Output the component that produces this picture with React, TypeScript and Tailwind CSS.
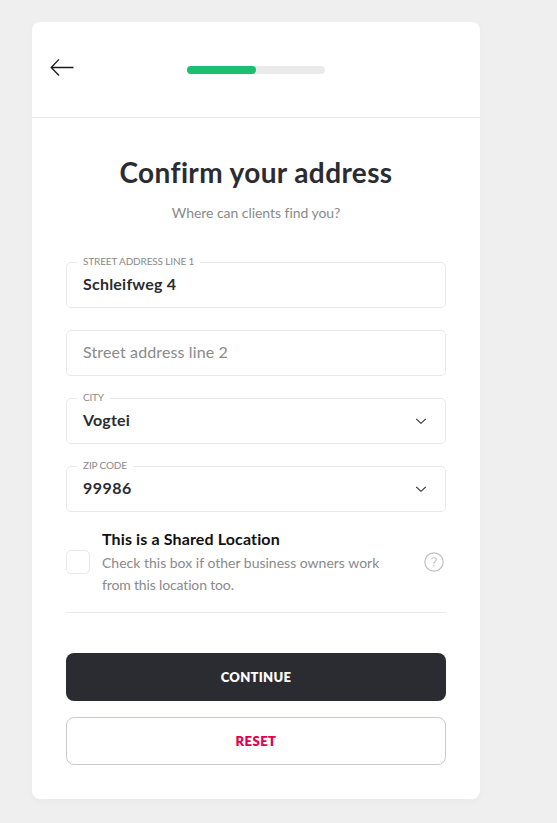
import React from "react";

function Chevron() {
  return (
    <svg width="12" height="8" viewBox="0 0 12 8" fill="none" className="shrink-0">
      <path d="M1.2 1.8 L6 6.3 L10.8 1.8" stroke="#2b2c31" strokeWidth="1.1" />
    </svg>
  );
}

type FieldProps = {
  label?: string;
  labelClass?: string;
  value?: string;
  valueClass?: string;
  placeholder?: string;
  select?: boolean;
};

function Field({ label, labelClass = "", value, valueClass = "", placeholder, select }: FieldProps) {
  return (
    <div className="relative flex h-[46px] items-center justify-between rounded-[5px] border border-[#e9e9e9] pl-4 pr-[18px]">
      {label && (
        <span className="absolute -top-[8px] left-[10px] bg-white px-[6px] text-[10px] leading-[12px] whitespace-nowrap text-[#8a8a8a]">
          <span className={labelClass}>{label}</span>
        </span>
      )}
      {value ? (
        <span className={`pb-[2px] text-base leading-5 font-bold whitespace-nowrap text-[#2b2c31] ${valueClass}`}>{value}</span>
      ) : (
        <span className="pb-[2px] text-base leading-5 tracking-[0.12px] whitespace-nowrap text-[#8a8a8a]">{placeholder}</span>
      )}
      {select && <Chevron />}
    </div>
  );
}

export default function App() {
  return (
    <div className="h-[823px] w-full overflow-hidden bg-[#efefef] pt-[22px] pl-8 font-['Lato','Open_Sans',sans-serif] [font-variant-ligatures:none]">
      <main className="flex h-[777px] w-[448px] flex-col rounded-lg bg-white shadow-[0_2px_8px_rgba(0,0,0,0.03)]">
        <header className="flex h-24 shrink-0 items-center border-b border-[#e9e9e9] pl-[18px]">
          <button className="mt-[-5px] shrink-0" aria-label="Back">
            <svg width="24" height="18" viewBox="0 0 24 18" fill="none">
              <path d="M9 1.4 L1.2 9.5 L9 17.5 M1.2 9.5 H23.5" stroke="#1c1c1e" strokeWidth="1.35" />
            </svg>
          </button>
          <div className="ml-[113px] h-2 w-[138px] rounded-full bg-[#eaeaea]">
            <div className="h-2 w-1/2 rounded-full bg-[#1bbf72]" />
          </div>
        </header>

        <section className="flex flex-col px-[34px]">
          <h1 className="mt-[36px] text-center text-[28px] leading-9 font-bold tracking-[0.38px] whitespace-nowrap text-[#2b2c31]">
            Confirm your address
          </h1>
          <p className="mt-[13px] text-center text-sm leading-5 tracking-[-0.05px] whitespace-nowrap text-[#8a8a8a]">
            Where can clients find you?
          </p>

          <div className="mt-[39px] flex flex-col gap-[22px]">
            <Field label="STREET ADDRESS LINE 1" labelClass="tracking-[-0.14px]" value="Schleifweg 4" valueClass="tracking-[0.22px]" />
            <Field placeholder="Street address line 2" />
            <Field label="CITY" labelClass="tracking-[-0.2px]" value="Vogtei" valueClass="tracking-[0.2px]" select />
            <Field label="ZIP CODE" labelClass="tracking-[-0.14px]" value="99986" valueClass="tracking-[0.5px]" select />
          </div>

          <div className="flex h-[101px] items-center border-b border-[#e9e9e9]">
            <span className="h-6 w-6 shrink-0 rounded-[5px] border border-[#e9e9e9]" />
            <div className="ml-3 grow">
              <div className="text-base leading-[22px] font-bold tracking-[0.13px] whitespace-nowrap text-[#111113]">
                This is a Shared Location
              </div>
              <div className="mt-[2px] text-sm leading-[22px] whitespace-nowrap text-[#8a8a8a]">
                Check this box if other business owners work
                <br />
                <span className="tracking-[-0.15px]">from this location too.</span>
              </div>
            </div>
            <svg width="20" height="20" viewBox="0 0 20 20" fill="none" className="mr-[2px] shrink-0">
              <circle cx="10" cy="10" r="9.2" stroke="#c1c1c5" strokeWidth="1.2" />
              <path d="M7.4 7.2 C7.9 6.3 8.8 5.8 9.9 5.8 C11.4 5.8 12.4 6.6 12.4 7.8 C12.4 9.5 9.9 9.6 9.9 11.7 M9.9 13 V14.2" stroke="#c1c1c5" strokeWidth="1.1" />
            </svg>
          </div>

          <button className="mt-10 h-12 rounded-lg bg-[#2b2c31] text-[13px] leading-5 font-extrabold tracking-[0.3px] text-white">
            CONTINUE
          </button>
          <button className="mt-4 h-12 rounded-lg border border-[#c9c9d6] text-[13px] leading-5 font-extrabold tracking-[0.5px] text-[#e3004f]">
            RESET
          </button>
        </section>
      </main>
    </div>
  );
}
